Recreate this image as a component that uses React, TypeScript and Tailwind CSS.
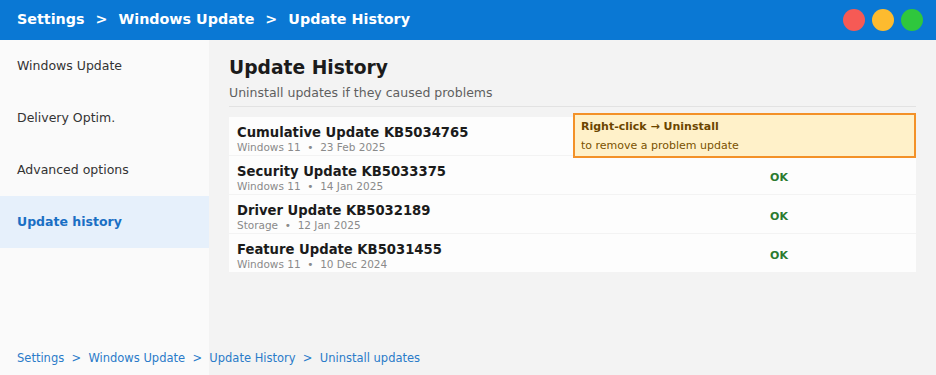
const FONT = "'DejaVu Sans', Verdana, sans-serif";

const NAV = ["Windows Update", "Delivery Optim.", "Advanced options", "Update history"];

const UPDATES = [
  { name: "Cumulative Update KB5034765", meta: "Windows 11", date: "23 Feb 2025" },
  { name: "Security Update KB5033375", meta: "Windows 11", date: "14 Jan 2025" },
  { name: "Driver Update KB5032189", meta: "Storage", date: "12 Jan 2025" },
  { name: "Feature Update KB5031455", meta: "Windows 11", date: "10 Dec 2024" },
];

const CRUMBS = ["Settings", "Windows Update", "Update History"];

export default function App() {
  return (
    <div
      className="relative w-[936px] h-[375px] overflow-hidden flex flex-col bg-[#f3f3f3]"
      style={{ fontFamily: FONT }}
    >
      {/* Title bar */}
      <header className="h-10 shrink-0 bg-[#0a78d4] flex items-center justify-between pl-[17px] pr-[13px]">
        <h1 className="flex items-center gap-[11px] text-white text-[14.3px] font-bold">
          {CRUMBS.map((c, i) => (
            <span key={c} className="flex items-center gap-[11px]">
              {i > 0 && <span>&gt;</span>}
              <span>{c}</span>
            </span>
          ))}
        </h1>
        <div className="flex items-center gap-[7px]">
          <span className="w-[22px] h-[22px] rounded-full bg-[#f65a55]" />
          <span className="w-[22px] h-[22px] rounded-full bg-[#fdbb2f]" />
          <span className="w-[22px] h-[22px] rounded-full bg-[#2fc73d]" />
        </div>
      </header>

      <div className="flex flex-1 min-h-0">
        {/* Sidebar */}
        <nav className="w-[209px] shrink-0 bg-[#fafafa]">
          {NAV.map((item, i) => {
            const active = i === NAV.length - 1;
            return (
              <div
                key={item}
                className={
                  active
                    ? "h-[52px] flex items-center pl-[17px] text-[12.5px] font-bold text-[#1a6fc4] bg-[#e6f0fb]"
                    : "h-[52px] flex items-center pl-[17px] text-[12.5px] text-[#333]"
                }
              >
                {item}
              </div>
            );
          })}
        </nav>

        {/* Main */}
        <main className="flex-1 px-5 pt-[16px]">
          <h2 className="text-[18.7px] font-bold text-[#1b1b1b] leading-[24px]">Update History</h2>
          <p className="text-[12.5px] text-[#5f5f5f] mt-[4px] leading-[17px]">
            Uninstall updates if they caused problems
          </p>
          <div className="h-px bg-[#e2e2e2] mt-[5px]" />

          <div className="relative mt-[10px] flex flex-col gap-px">
            {UPDATES.map((u, i) => (
              <div key={u.name} className="h-[38px] bg-[#fdfdfd] flex">
                <div className="flex-1 pl-2 pt-[8px]">
                  <div className="text-[13.2px] font-bold text-[#1b1b1b] leading-[16px]">{u.name}</div>
                  <div className="text-[10.5px] text-[#8a8a8a] leading-[14px] -mt-px">
                    {u.meta} &nbsp;•&nbsp; {u.date}
                  </div>
                </div>
                <div className="w-[274px] pt-[15px] text-center text-[11px] font-bold text-[#2b7a2f] leading-[14px]">
                  {i === 0 ? "" : "OK"}
                </div>
              </div>
            ))}

            {/* Hint callout */}
            <div className="absolute -top-[4px] left-[344px] right-0 h-[45px] bg-[#fff1c9] border-2 border-[#f39128] px-[6px] pt-[2px] flex flex-col justify-center gap-[5px]">
              <div className="text-[11px] font-bold text-[#6b4500] leading-[14px]">Right-click → Uninstall</div>
              <div className="text-[11px] text-[#7a5200] leading-[14px]">to remove a problem update</div>
            </div>
          </div>
        </main>
      </div>

      {/* Footer breadcrumb */}
      <div className="absolute left-[17px] bottom-[8px] text-[11.5px] text-[#2a7bc9]">
        Settings &nbsp;&gt;&nbsp; Windows Update &nbsp;&gt;&nbsp; Update History &nbsp;&gt;&nbsp; Uninstall updates
      </div>
    </div>
  );
}
